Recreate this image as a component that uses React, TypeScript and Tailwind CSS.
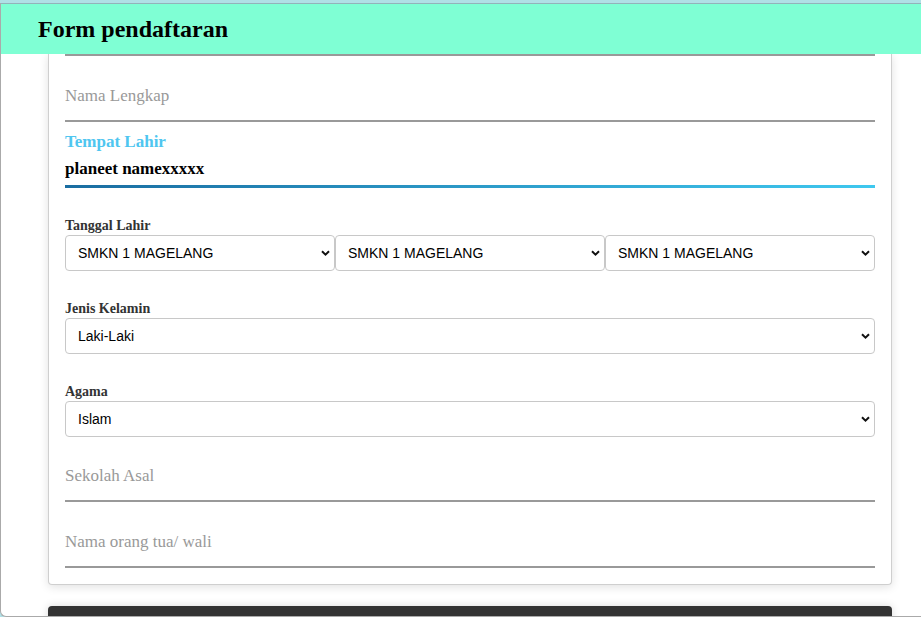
import React from 'react';

const serif = { fontFamily: '"Liberation Serif", "Times New Roman", serif' };

function LineInput({ placeholder, className = '' }: { placeholder: string; className?: string }) {
  return (
    <input
      type="text"
      placeholder={placeholder}
      className={`block w-full h-[49px] border-b-2 border-[#999] bg-transparent pb-[2px] text-[17px] text-black outline-none placeholder:text-[#999] ${className}`}
      style={serif}
    />
  );
}

function Chevron() {
  return (
    <svg
      className="pointer-events-none absolute right-[5px] top-1/2 -translate-y-1/2"
      width="9"
      height="6"
      viewBox="0 0 9 6"
      fill="none"
    >
      <path d="M1 1.2 L4.5 4.6 L8 1.2" stroke="#111" strokeWidth="2" />
    </svg>
  );
}

function Select({ options, className = '' }: { options: string[]; className?: string }) {
  return (
    <div className={`relative ${className}`}>
      <select
        className="block h-9 w-full appearance-none rounded-[4px] border border-[#c8c8c8] bg-white pl-3 pr-6 text-sm text-black outline-none"
        style={{ fontFamily: '"Liberation Sans", Arial, sans-serif' }}
        defaultValue={options[0]}
      >
        {options.map((o) => (
          <option key={o}>{o}</option>
        ))}
      </select>
      <Chevron />
    </div>
  );
}

function FieldLabel({ children }: { children: React.ReactNode }) {
  return (
    <label className="mt-[30px] block text-sm font-bold leading-4 text-[#333]" style={serif}>
      {children}
    </label>
  );
}

export default function App() {
  const schools = ['SMKN 1 MAGELANG', 'SMKN 2 MAGELANG', 'SMAN 1 MAGELANG'];

  return (
    <div className="h-[617px] overflow-hidden bg-[#b0e0e6] pt-[3px]">
      <div className="flex h-[614px] flex-col overflow-hidden rounded-bl-md border-t border-t-[#93b3ba] border-l border-b border-l-[#aaa] border-b-[#aaa] bg-white">
        <header className="flex h-[50px] shrink-0 items-center bg-[#7fffd4] pl-[37px]">
          <h1 className="text-2xl font-bold text-black" style={serif}>
            Form pendaftaran
          </h1>
        </header>

        <div className="flex-1 overflow-hidden">
          <form className="ml-[47px] w-[844px] rounded-b-[4px] border-x border-b border-[#cfcfcf] bg-white px-4 pb-4 shadow-[0_2px_10px_rgba(0,0,0,0.12)]">
            <div className="border-b-2 border-[#999]" />

            <LineInput placeholder="Nama Lengkap" className="mt-[17px]" />

            <div className="mt-[10px] text-[17px] font-bold leading-5 text-[#4fc6f0]" style={serif}>
              Tempat Lahir
            </div>
            <input
              type="text"
              defaultValue="planeet namexxxxx"
              className="mt-[7px] block h-5 w-full bg-transparent text-[17px] font-bold leading-5 text-black outline-none"
              style={serif}
            />
            <div className="mt-[6px] h-[3px] w-full bg-linear-to-r from-[#1a6da1] to-[#3fc8ef]" />

            <FieldLabel>Tanggal Lahir</FieldLabel>
            <div className="mt-px grid grid-cols-3">
              <Select options={schools} />
              <Select options={schools} />
              <Select options={schools} />
            </div>

            <FieldLabel>Jenis Kelamin</FieldLabel>
            <Select options={['Laki-Laki', 'Perempuan']} className="mt-px" />

            <FieldLabel>Agama</FieldLabel>
            <Select options={['Islam', 'Kristen', 'Katolik', 'Hindu', 'Buddha']} className="mt-px" />

            <LineInput placeholder="Sekolah Asal" className="mt-[16px]" />
            <LineInput placeholder="Nama orang tua/ wali" className="mt-[17px]" />
          </form>

          <div className="ml-[47px] mt-[21px] h-12 w-[844px] rounded-t-[4px] bg-[#333] shadow-[0_0_8px_rgba(0,0,0,0.15)]" />
        </div>
      </div>
    </div>
  );
}
